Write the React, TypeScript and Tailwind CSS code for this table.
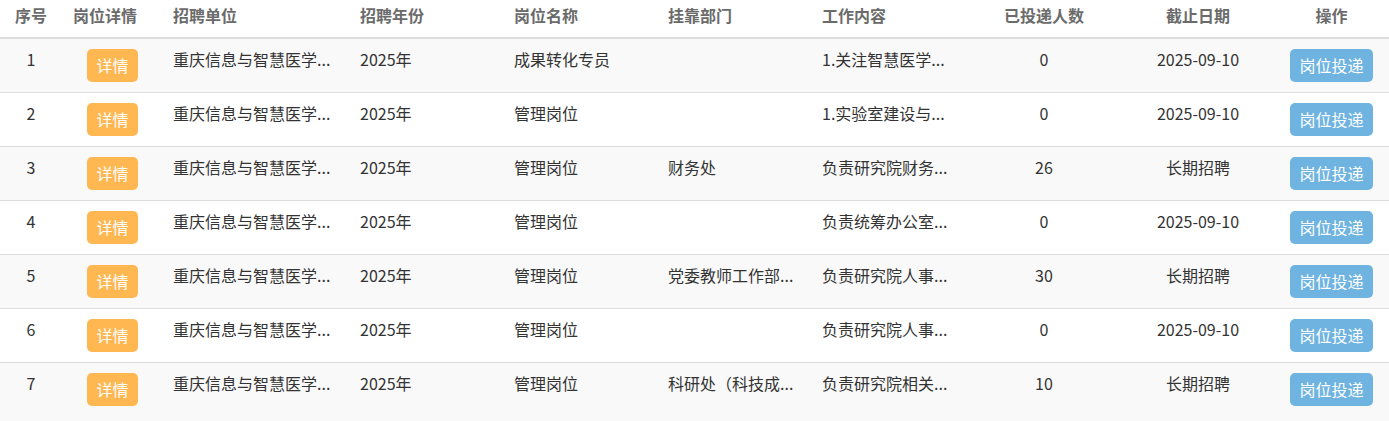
import React from "react";

interface JobRow {
  id: number;
  unit: string;
  year: string;
  title: string;
  dept: string;
  content: string;
  applied: number;
  deadline: string;
}

const rows: JobRow[] = [
  { id: 1, unit: "重庆信息与智慧医学...", year: "2025年", title: "成果转化专员", dept: "", content: "1.关注智慧医学...", applied: 0, deadline: "2025-09-10" },
  { id: 2, unit: "重庆信息与智慧医学...", year: "2025年", title: "管理岗位", dept: "", content: "1.实验室建设与...", applied: 0, deadline: "2025-09-10" },
  { id: 3, unit: "重庆信息与智慧医学...", year: "2025年", title: "管理岗位", dept: "财务处", content: "负责研究院财务...", applied: 26, deadline: "长期招聘" },
  { id: 4, unit: "重庆信息与智慧医学...", year: "2025年", title: "管理岗位", dept: "", content: "负责统筹办公室...", applied: 0, deadline: "2025-09-10" },
  { id: 5, unit: "重庆信息与智慧医学...", year: "2025年", title: "管理岗位", dept: "党委教师工作部...", content: "负责研究院人事...", applied: 30, deadline: "长期招聘" },
  { id: 6, unit: "重庆信息与智慧医学...", year: "2025年", title: "管理岗位", dept: "", content: "负责研究院人事...", applied: 0, deadline: "2025-09-10" },
  { id: 7, unit: "重庆信息与智慧医学...", year: "2025年", title: "管理岗位", dept: "科研处（科技成...", content: "负责研究院相关...", applied: 10, deadline: "长期招聘" },
];

const cols =
  "grid grid-cols-[62px_101px_187px_154px_154px_154px_154px_156px_152px_115px]";

export default function App() {
  return (
    <div
      className="min-h-screen w-[1389px] bg-[#f9f9f9] text-[16px] text-[#333]"
      style={{ fontFamily: '"Noto Sans CJK SC", "Noto Sans", sans-serif' }}
    >
      {/* Header */}
      <div
        className={`${cols} h-[39px] bg-white border-b-2 border-[#ddd] pt-[4px] leading-[22px] font-bold text-[#6b6b6b]`}
      >
        <div className="text-center">序号</div>
        <div className="pl-[11px]">岗位详情</div>
        <div className="pl-[10px]">招聘单位</div>
        <div className="pl-[10px]">招聘年份</div>
        <div className="pl-[10px]">岗位名称</div>
        <div className="pl-[10px]">挂靠部门</div>
        <div className="pl-[10px]">工作内容</div>
        <div className="text-center">已投递人数</div>
        <div className="text-center">截止日期</div>
        <div className="text-center">操作</div>
      </div>

      {/* Rows */}
      {rows.map((row, i) => (
        <div
          key={row.id}
          className={`${cols} pt-[9px] leading-[22px] ${
            i > 0 ? "h-[54px] border-t border-[#ddd]" : "h-[53px]"
          } ${i % 2 === 0 ? "bg-[#f9f9f9]" : "bg-white"}`}
        >
          <div className="text-center">{row.id}</div>
          <div className="flex justify-center pt-px">
            <button className="h-[33px] px-[9.5px] rounded-[5px] bg-[#ffb752] text-white leading-[33px]">
              详情
            </button>
          </div>
          <div className="pl-[10px] whitespace-nowrap">{row.unit}</div>
          <div className="pl-[10px]">{row.year}</div>
          <div className="pl-[10px]">{row.title}</div>
          <div className="pl-[10px] whitespace-nowrap">{row.dept}</div>
          <div className="pl-[10px] whitespace-nowrap">{row.content}</div>
          <div className="text-center">{row.applied}</div>
          <div className="text-center">{row.deadline}</div>
          <div className="flex justify-center pt-px">
            <button className="h-[33px] px-[9px] rounded-[5px] bg-[#6fb3e0] text-white leading-[33px]">
              岗位投递
            </button>
          </div>
        </div>
      ))}
    </div>
  );
}
